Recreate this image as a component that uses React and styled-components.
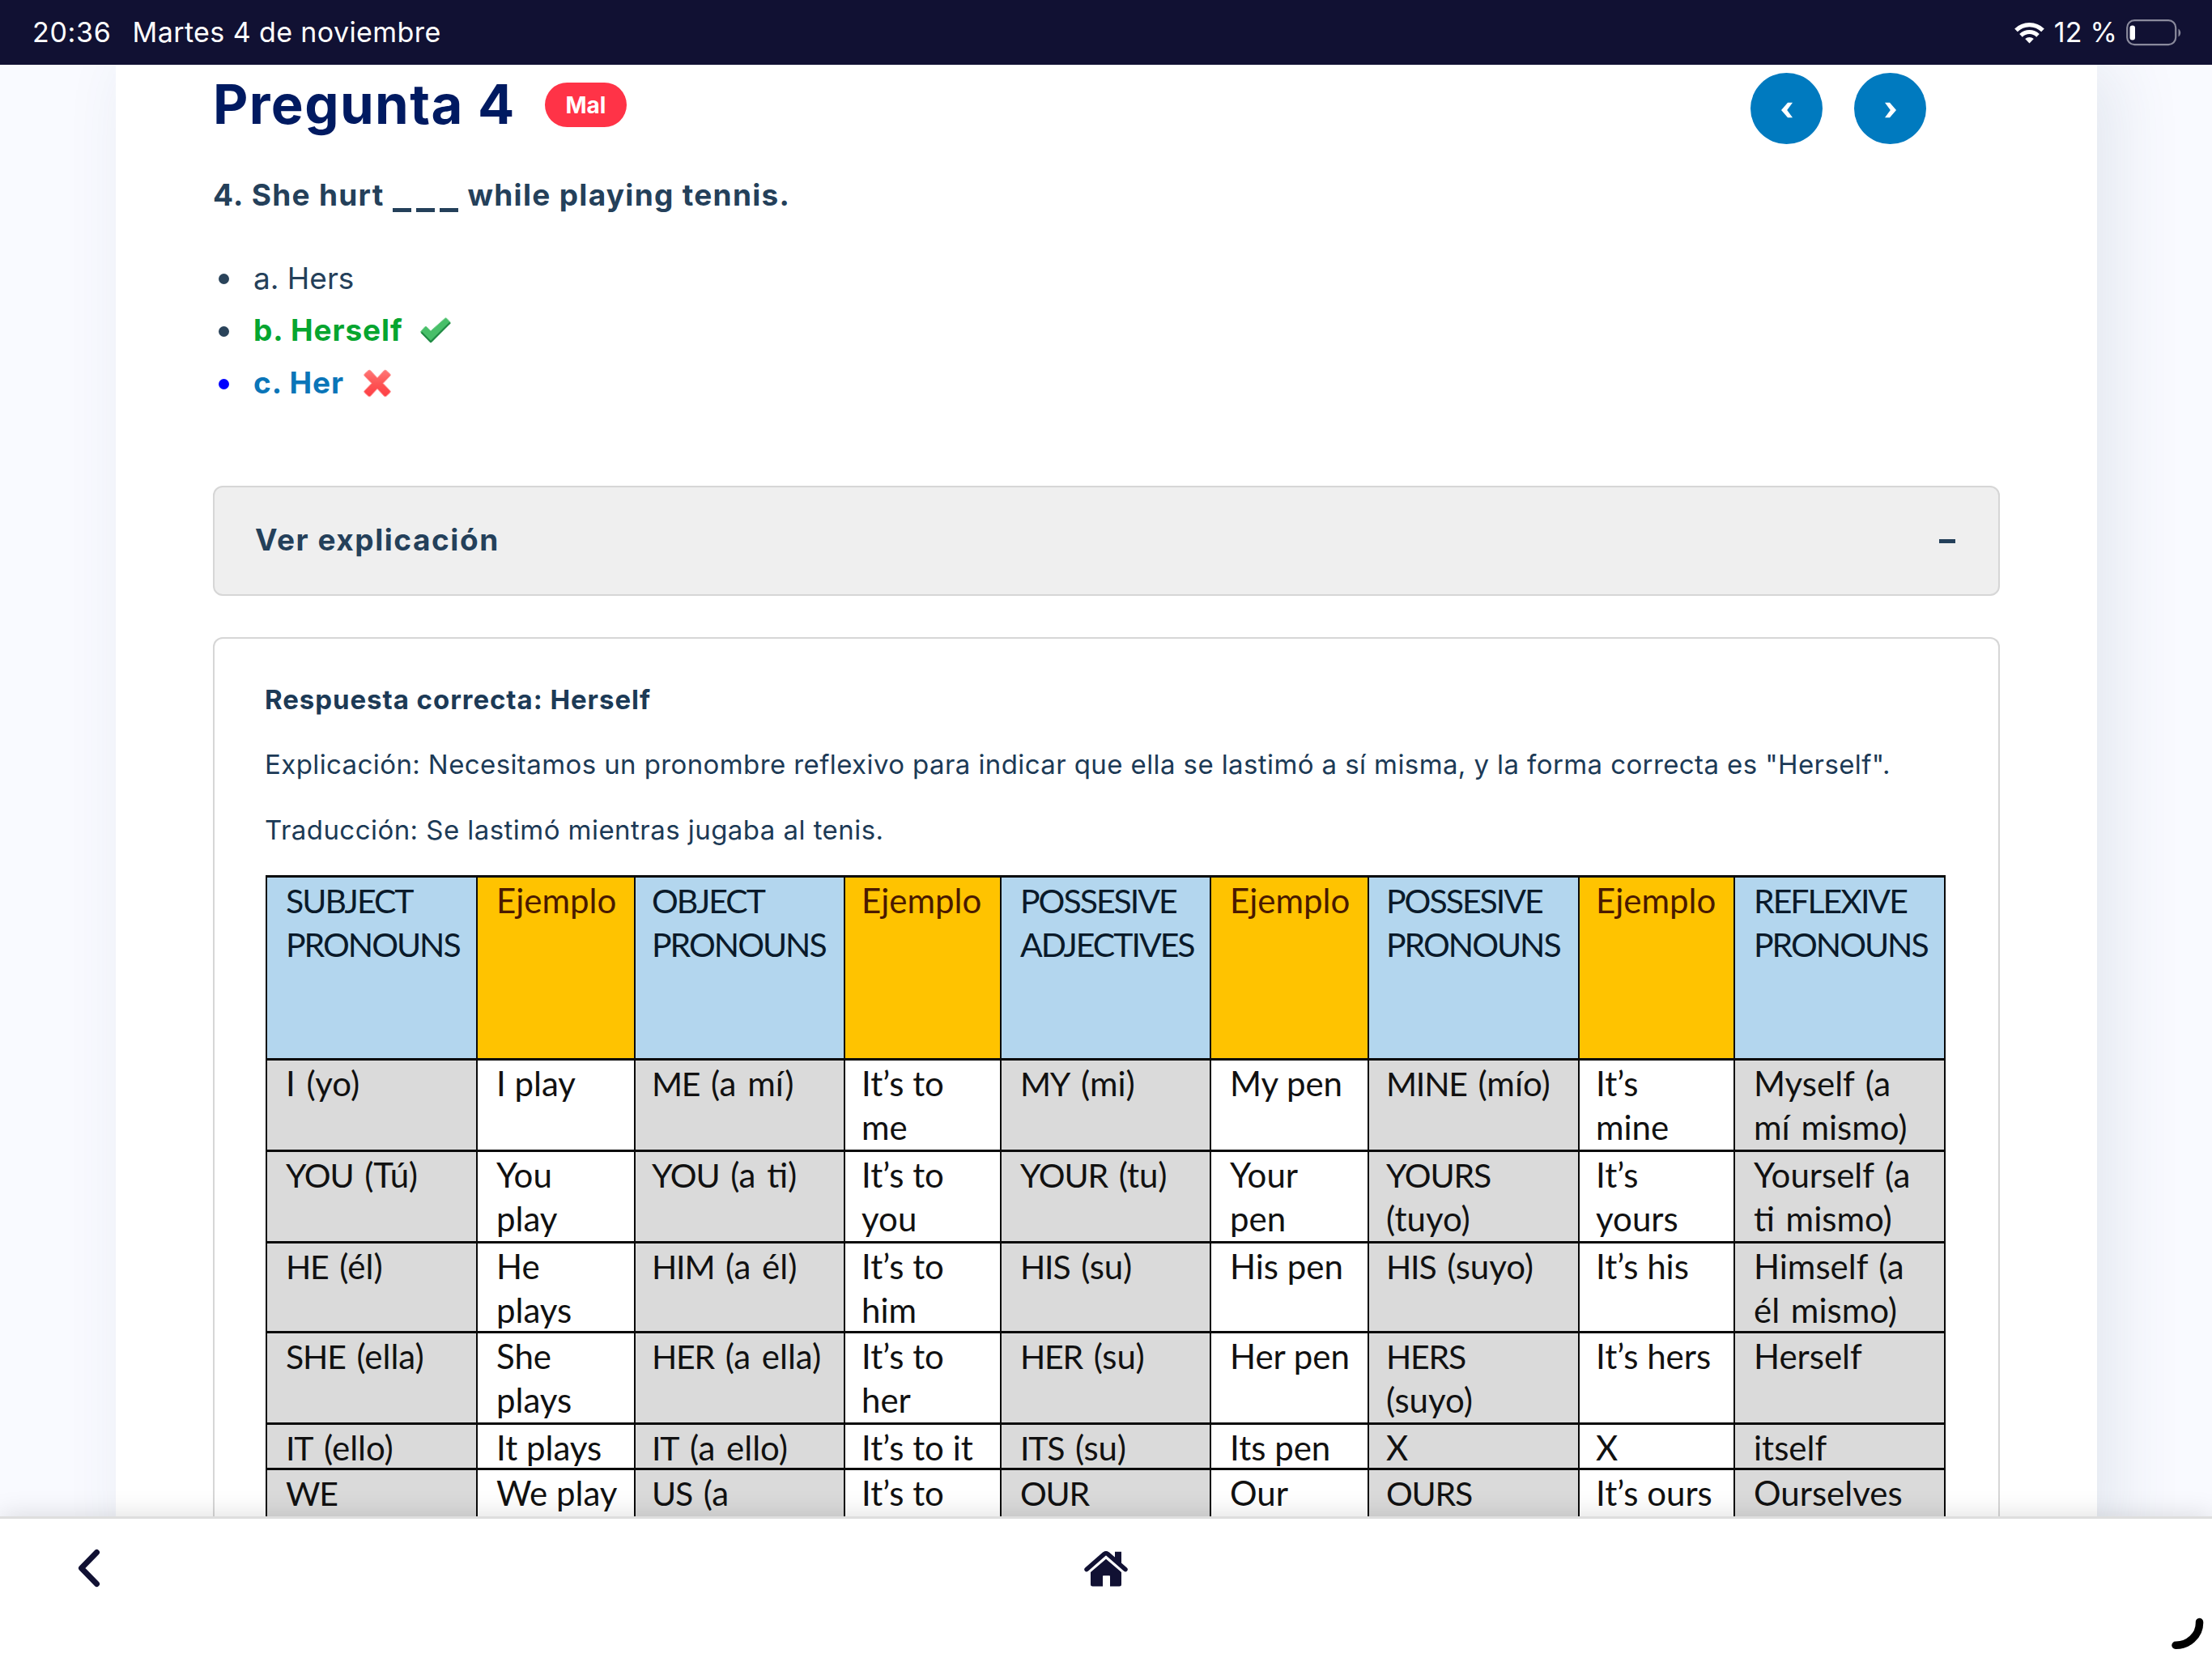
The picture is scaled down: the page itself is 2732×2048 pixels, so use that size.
import React from "react";
import styled, { createGlobalStyle } from "styled-components";

const ink = "#24405a";
const night = "#111133";

const GlobalStyle = createGlobalStyle`
  * { box-sizing: border-box; margin: 0; padding: 0; }
  body {
    background: #f9faff;
    color: ${ink};
    font-family: Inter, "Open Sans", sans-serif;
    overflow: hidden;
  }
`;

const Screen = styled.div`
  display: flex;
  flex-direction: column;
  height: 2048px;
  overflow: hidden;
`;

const StatusBar = styled.header`
  flex: none;
  height: 80px;
  padding: 0 36px 0 40px;
  display: flex;
  align-items: center;
  background: ${night};
  color: #fff;
  font-size: 34px;
  line-height: 80px;
  white-space: nowrap;
  position: relative;
  z-index: 2;
`;

const Clock = styled.span`
  letter-spacing: 0.7px;
  margin-right: 26px;
`;

const DateText = styled.span`
  letter-spacing: 0.4px;
  flex: 1;
`;

const Battery = styled.span`
  letter-spacing: 0.2px;
  margin: 0 11px 0 12px;
`;

const Viewport = styled.div`
  flex: 1;
  min-height: 0;
  overflow: hidden;
  padding-left: 143px;
`;

const Card = styled.main`
  width: 2447px;
  min-height: 100%;
  padding: 4px 120px 0;
  background: #fff;
  box-shadow: 22px 0 80px rgba(50, 80, 110, 0.11);
`;

const TitleRow = styled.div`
  display: flex;
  align-items: flex-start;
  height: 94px;
`;

const Title = styled.h1`
  width: 407px;
  font-size: 67px;
  font-weight: 700;
  line-height: 89px;
  letter-spacing: 1.4px;
  color: #001a61;
  white-space: nowrap;
`;

const Badge = styled.span`
  margin: 18px 0 0 3px;
  width: 101px;
  height: 55px;
  border-radius: 28px;
  background: #ff3347;
  color: #fff;
  font-size: 28px;
  font-weight: 700;
  line-height: 56px;
  text-align: center;
`;

const Pager = styled.nav`
  margin: 6px 91px 0 auto;
  display: flex;
  gap: 39px;
`;

const RoundButton = styled.button`
  width: 89px;
  height: 88px;
  border: 0;
  border-radius: 50%;
  background: #007abf;
  display: flex;
  align-items: center;
  justify-content: center;
  padding-top: 3px;
`;

const Question = styled.p`
  margin-top: 33px;
  font-size: 37px;
  font-weight: 700;
  line-height: 60px;
  letter-spacing: 1.3px;
  white-space: nowrap;
`;

const Blank = styled.span`
  display: inline-flex;
  gap: 6px;
  width: 83px;
  margin: 0 10px;
  position: relative;
  top: 8px;
`;

const Dash = styled.i`
  width: 23px;
  height: 5px;
  background: ${ink};
`;

const Options = styled.ul`
  list-style: none;
  margin-top: 40px;
  height: 194px;
`;

const Option = styled.li`
  display: flex;
  align-items: center;
  height: 64.67px;
  font-size: 37px;
  font-weight: ${(p) => (p.$bold ? 700 : 400)};
  letter-spacing: ${(p) => (p.$bold ? 0.9 : 0)}px;
  color: ${(p) => p.$color || ink};
  white-space: nowrap;

  &::before {
    content: "";
    flex: none;
    width: 13px;
    height: 13px;
    margin: 3px 30px 0 7px;
    border-radius: 50%;
    background: ${(p) => p.$dot || "#2a435a"};
  }

  svg {
    flex: none;
    margin: 1px 0 0 ${(p) => p.$gap}px;
  }
`;

const Accordion = styled.button`
  margin-top: 95px;
  width: 2207px;
  height: 136px;
  padding: 0 53px 3px 50px;
  display: flex;
  align-items: center;
  justify-content: space-between;
  border: 2px solid #d6d6d6;
  border-radius: 12px;
  background: #efefef;
  color: ${ink};
  font: 700 37px Inter, "Open Sans", sans-serif;
  letter-spacing: 1.55px;
`;

const Minus = styled.i`
  width: 20px;
  height: 5px;
  margin-top: 4px;
  background: ${ink};
`;

const Panel = styled.section`
  margin-top: 51px;
  width: 2207px;
  padding: 35px 0 0 63px;
  border: 2px solid #d6d6d6;
  border-bottom: 0;
  border-radius: 12px 12px 0 0;
`;

const Line = styled.p`
  font-size: 33px;
  font-weight: ${(p) => (p.$bold ? 700 : 400)};
  letter-spacing: ${(p) => p.$track}px;
  line-height: 80.3px;
  color: #1c3a56;
  white-space: nowrap;
  margin-left: -1px;
`;

const Grid = styled.div`
  margin-top: 16px;
  width: 2075px;
  display: grid;
  grid-template-columns: 258px 193px 257px 191px 257px 193px 258px 190px 258px;
  grid-template-rows: 223px 110px 110px 108px 110px 53px 110px;
  gap: 3px 2px;
  padding: 3px 2px;
  background: #0a0a0a;
  font: 400 42px/54px Lato, Carlito, sans-serif;
`;

const cellColors = {
  head: "#b3d6ee",
  headExample: "#ffc300",
  pronoun: "#dadada",
  example: "#fff",
};

const textColors = {
  head: "#0a1a2a",
  headExample: "#4a1a00",
  pronoun: "#111",
  example: "#111",
};

const Caps = styled.span`
  font-size: 41px;
  line-height: 0;
  letter-spacing: -2px;
`;

const Cell = styled.div`
  padding: 1px 0 0 ${(p) => p.$inset}px;
  background: ${(p) => cellColors[p.$kind]};
  color: ${(p) => textColors[p.$kind]};
  word-spacing: ${(p) => (p.$kind === "pronoun" ? 3 : 0)}px;
  white-space: pre;
  overflow: hidden;

  ${Caps} {
    letter-spacing: ${(p) => (p.$kind === "pronoun" ? -1.2 : -2)}px;
  }
`;

const BottomBar = styled.footer`
  flex: none;
  height: 175px;
  display: grid;
  grid-template-columns: 1fr auto 1fr;
  align-items: start;
  padding: 37px 10px 0 96px;
  background: #fff;
  border-top: 3px solid #dedede;
  box-shadow: 0 0 32px rgba(0, 0, 0, 0.14);
  position: relative;
  z-index: 2;
`;

const HomeSlot = styled.div`
  margin: 3px 35px 0 -51px;
`;

const LoadingSlot = styled.div`
  justify-self: end;
  margin-top: 84px;
`;

const Chevron = ({ flip }) => (
  <svg width="14" height="20" viewBox="0 0 14 20">
    <path
      d="M8 .8h6L7.2 10 14 19.2H8L0 10z"
      fill="#fff"
      transform={flip ? "translate(14 0) scale(-1 1)" : undefined}
    />
  </svg>
);

const Wifi = () => (
  <svg width="37" height="27" viewBox="0 0 37 27">
    <g fill="none" stroke="#fff" strokeWidth="5.2">
      <path d="M2 10.3a23.5 23.5 0 0 1 33 0" />
      <path d="M8 16.8a15 15 0 0 1 21 0" />
    </g>
    <path d="M18.5 26.5l-5.3-5.4a7.5 7.5 0 0 1 10.6 0z" fill="#fff" />
  </svg>
);

const BatteryIcon = () => (
  <svg width="70" height="33" viewBox="0 0 70 33">
    <rect x="1.2" y="1.2" width="60" height="30" rx="9" fill="none" stroke="#8a8a9c" strokeWidth="2.2" />
    <path d="M64.5 11.5a6 6 0 0 1 0 10z" fill="#8a8a9c" />
    <rect x="4.5" y="7.5" width="6.5" height="18" rx="3" fill="#fff" />
  </svg>
);

const Check = () => (
  <svg width="40" height="34" viewBox="0 0 40 34">
    <path
      d="M2 18L7 12.600q1-.8 2 .2l5 5L31.500 2.300q1.200-1 2.200 0l4 4.200q.8 1-.2 2L15.500 31q-1.300 1.300-2.600 0L2 19.700q-.8-.8 0-1.700z"
      fill="#48bf69"
      stroke="#78d190"
      strokeWidth="1"
    />
    <path d="M2.500 19.500L14 31.300 38 7.500" fill="none" stroke="#218a45" strokeWidth="2.200" strokeLinejoin="round" />
  </svg>
);

const Cross = () => (
  <svg width="36" height="35" viewBox="0 0 36 35">
    <defs>
      <linearGradient id="cross" x1="0" y1="0" x2="0" y2="1">
        <stop offset="0" stopColor="#ff7676" />
        <stop offset=".5" stopColor="#fd5555" />
        <stop offset="1" stopColor="#ff3f45" />
      </linearGradient>
    </defs>
    <path
      d="M9.500 1.700L18 10.800l8.500-9.100q1.300-1 2.600 0l4.600 4.200q1.200 1.200 0 2.500L25 17.500l8.700 9q1.200 1.300 0 2.500l-4.600 4.300q-1.300 1-2.600 0L18 24.200l-8.500 9.100q-1.300 1-2.600 0L2.300 29q-1.200-1.200 0-2.500l8.700-9-8.700-9.100q-1.200-1.300 0-2.500l4.600-4.200q1.300-1 2.600 0z"
      fill="url(#cross)"
      stroke="#ff8d8d"
      strokeWidth="1"
    />
  </svg>
);

const BackIcon = () => (
  <svg width="28" height="48" viewBox="0 0 28 48">
    <path d="M23.500 4.500L4.500 24l19 19.500" fill="none" stroke={night} strokeWidth="7" strokeLinecap="round" strokeLinejoin="round" />
  </svg>
);

const HomeIcon = () => (
  <svg width="54" height="44" viewBox="0 0 54 44">
    <path d="M38 .8h8v16l-8-7z" fill={night} />
    <path d="M8 26L27 9.800 46 26v15q0 2.500-2.500 2.500H32V31q0-.8-.8-.8h-7.400q-.8 0-.8.8v12.500H10.500Q8 43.500 8 41z" fill={night} />
    <path d="M3 25L27 4.500 51 25" fill="none" stroke="#fff" strokeWidth="6" />
    <path d="M3 22.600L25 3.400q2-1.500 4 0l22 19.200" fill="none" stroke={night} strokeWidth="5.400" strokeLinecap="round" strokeLinejoin="round" />
  </svg>
);

const LoadingArc = () => (
  <svg width="42" height="42" viewBox="0 0 42 42">
    <path d="M36.500 6.500Q37 19 27.500 27.500 19 35.500 7 35.300" fill="none" stroke="#000" strokeWidth="9.500" strokeLinecap="round" />
  </svg>
);

const insets = [23, 23, 20, 20, 23, 23, 21, 20, 23];

const heads = [
  "SUBJECT\nPRONOUNS", "Ejemplo", "OBJECT\nPRONOUNS", "Ejemplo", "POSSESIVE\nADJECTIVES",
  "Ejemplo", "POSSESIVE\nPRONOUNS", "Ejemplo", "REFLEXIVE\nPRONOUNS",
];

const rows = [
  ["I (yo)", "I play", "ME (a mí)", "It’s to\nme", "MY (mi)", "My pen", "MINE (mío)", "It’s\nmine", "Myself (a\nmí mismo)"],
  ["YOU (Tú)", "You\nplay", "YOU (a ti)", "It’s to\nyou", "YOUR (tu)", "Your\npen", "YOURS\n(tuyo)", "It’s\nyours", "Yourself (a\nti mismo)"],
  ["HE (él)", "He\nplays", "HIM (a él)", "It’s to\nhim", "HIS (su)", "His pen", "HIS (suyo)", "It’s his", "Himself (a\nél mismo)"],
  ["SHE (ella)", "She\nplays", "HER (a ella)", "It’s to\nher", "HER (su)", "Her pen", "HERS\n(suyo)", "It’s hers", "Herself"],
  ["IT (ello)", "It plays", "IT (a ello)", "It’s to it", "ITS (su)", "Its pen", "X", "X", "itself"],
  ["WE", "We play", "US (a", "It’s to", "OUR", "Our", "OURS", "It’s ours", "Ourselves"],
];

// Runs of capitals are set a little tighter than mixed-case words.
const withCaps = (text) =>
  text.split(/([A-Z]{2,})/).map((part, i) => (i % 2 ? <Caps key={i}>{part}</Caps> : part));

export default function App() {
  return (
    <Screen>
      <GlobalStyle />
      <StatusBar>
        <Clock>20:36</Clock>
        <DateText>Martes 4 de noviembre</DateText>
        <Wifi />
        <Battery>12 %</Battery>
        <BatteryIcon />
      </StatusBar>

      <Viewport>
        <Card>
          <TitleRow>
            <Title>Pregunta 4</Title>
            <Badge>Mal</Badge>
            <Pager>
              <RoundButton aria-label="Anterior"><Chevron /></RoundButton>
              <RoundButton aria-label="Siguiente"><Chevron flip /></RoundButton>
            </Pager>
          </TitleRow>

          <Question>
            4. She hurt
            <Blank><Dash /><Dash /><Dash /></Blank>
            while playing tennis.
          </Question>

          <Options>
            <Option>a. Hers</Option>
            <Option $bold $gap={20} $color="#06a52f">b. Herself<Check /></Option>
            <Option $bold $gap={23} $color="#0a75b8" $dot="#0000ff">c. Her<Cross /></Option>
          </Options>

          <Accordion>
            Ver explicación
            <Minus />
          </Accordion>

          <Panel>
            <Line $bold $track={0.95}>Respuesta correcta: Herself</Line>
            <Line $track={0.4}>
              Explicación: Necesitamos un pronombre reflexivo para indicar que ella se lastimó a sí misma, y la forma correcta es "Herself".
            </Line>
            <Line $track={0.45}>Traducción: Se lastimó mientras jugaba al tenis.</Line>

            <Grid>
              {heads.map((text, i) => (
                <Cell key={i} $inset={insets[i]} $kind={i % 2 ? "headExample" : "head"}>{withCaps(text)}</Cell>
              ))}
              {rows.map((row, r) =>
                row.map((text, i) => (
                  <Cell key={`${r}-${i}`} $inset={insets[i]} $kind={i % 2 ? "example" : "pronoun"}>{withCaps(text)}</Cell>
                ))
              )}
            </Grid>
          </Panel>
        </Card>
      </Viewport>

      <BottomBar>
        <BackIcon />
        <HomeSlot><HomeIcon /></HomeSlot>
        <LoadingSlot><LoadingArc /></LoadingSlot>
      </BottomBar>
    </Screen>
  );
}
